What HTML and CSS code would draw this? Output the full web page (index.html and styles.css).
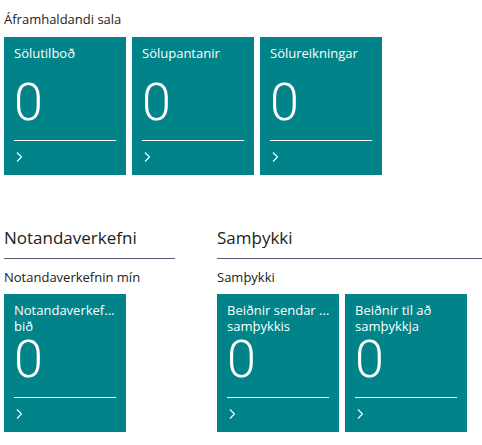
FILE: index.html
```html
<!DOCTYPE html>
<html lang="is">
  <head>
    <meta charset="UTF-8" />
    <meta name="viewport" content="width=device-width, initial-scale=1.0" />
    <title>Hlutverkamiðstöð</title>
    <link rel="stylesheet" href="styles.css">
  </head>
  <body>
    <section class="group">
      <h3 class="group-title">Áframhaldandi sala</h3>
      <div class="tiles">
        <a class="tile" href="#">
          <span class="tile-title"><span>Sölutilboð</span></span>
          <span class="tile-value">0</span>
          <span class="tile-foot"><svg width="6" height="10" viewBox="0 0 6 10"><path d="M1 .5l4.5 4.5L1 9.5" fill="none" stroke="#fff" stroke-width="1.1"/></svg></span>
        </a>
        <a class="tile" href="#">
          <span class="tile-title"><span>Sölupantanir</span></span>
          <span class="tile-value">0</span>
          <span class="tile-foot"><svg width="6" height="10" viewBox="0 0 6 10"><path d="M1 .5l4.5 4.5L1 9.5" fill="none" stroke="#fff" stroke-width="1.1"/></svg></span>
        </a>
        <a class="tile" href="#">
          <span class="tile-title"><span>Sölureikningar</span></span>
          <span class="tile-value">0</span>
          <span class="tile-foot"><svg width="6" height="10" viewBox="0 0 6 10"><path d="M1 .5l4.5 4.5L1 9.5" fill="none" stroke="#fff" stroke-width="1.1"/></svg></span>
        </a>
      </div>
    </section>

    <div class="parts">
      <section class="part part-tasks">
        <h2 class="part-title">Notandaverkefni</h2>
        <h3 class="group-title">Notandaverkefnin mín</h3>
        <div class="tiles">
          <a class="tile" href="#">
            <span class="tile-title"><span>Notandaverkef...</span><span>bið</span></span>
            <span class="tile-value">0</span>
            <span class="tile-foot"><svg width="6" height="10" viewBox="0 0 6 10"><path d="M1 .5l4.5 4.5L1 9.5" fill="none" stroke="#fff" stroke-width="1.1"/></svg></span>
          </a>
        </div>
      </section>

      <section class="part part-approvals">
        <h2 class="part-title">Samþykki</h2>
        <h3 class="group-title">Samþykki</h3>
        <div class="tiles">
          <a class="tile" href="#">
            <span class="tile-title"><span>Beiðnir sendar ...</span><span>samþykkis</span></span>
            <span class="tile-value">0</span>
            <span class="tile-foot"><svg width="6" height="10" viewBox="0 0 6 10"><path d="M1 .5l4.5 4.5L1 9.5" fill="none" stroke="#fff" stroke-width="1.1"/></svg></span>
          </a>
          <a class="tile" href="#">
            <span class="tile-title"><span>Beiðnir til að</span><span>samþykkja</span></span>
            <span class="tile-value">0</span>
            <span class="tile-foot"><svg width="6" height="10" viewBox="0 0 6 10"><path d="M1 .5l4.5 4.5L1 9.5" fill="none" stroke="#fff" stroke-width="1.1"/></svg></span>
          </a>
        </div>
      </section>
    </div>
  </body>
</html>
```

FILE: styles.css
```css
body {
  font-family: "Open Sans", "Noto Sans", sans-serif;
  margin: 0;
  padding: 0 4px;
  background: #fff;
  color: #212121;
  overflow: hidden;
}
.group-title {
  font-size: 13px;
  font-weight: 400;
  line-height: 17px;
  margin: 11px 0 9px;
}
.tiles {
  display: flex;
  gap: 6px;
}
.tile {
  display: flex;
  flex-direction: column;
  width: 122px;
  height: 138px;
  box-sizing: border-box;
  padding: 8px 10px 0;
  background: #008489;
  color: #fff;
  text-decoration: none;
}
.tile-title {
  display: flex;
  flex-direction: column;
  height: 33px;
  font-size: 13px;
  line-height: 16px;
  white-space: nowrap;
}
.tile-value {
  font-family: Roboto, sans-serif;
  font-weight: 300;
  font-size: 52px;
  line-height: 50px;
  height: 62px;
  border-bottom: 1px solid #fff;
}
.tile-foot {
  padding: 11px 0 0 2px;
}
.tile-foot svg {
  display: block;
}
.parts {
  display: flex;
  gap: 42px;
  margin-top: 51px;
}
.part-tasks {
  width: 171px;
  flex-shrink: 0;
}
.part-approvals {
  flex: 1;
  margin-right: -4px;
}
.part-title {
  font-size: 17px;
  font-weight: 400;
  line-height: 24px;
  margin: 0;
  padding-bottom: 8px;
  border-bottom: 1px solid #505c6d;
}
.part .group-title {
  margin: 10px 0 8px;
}
```
